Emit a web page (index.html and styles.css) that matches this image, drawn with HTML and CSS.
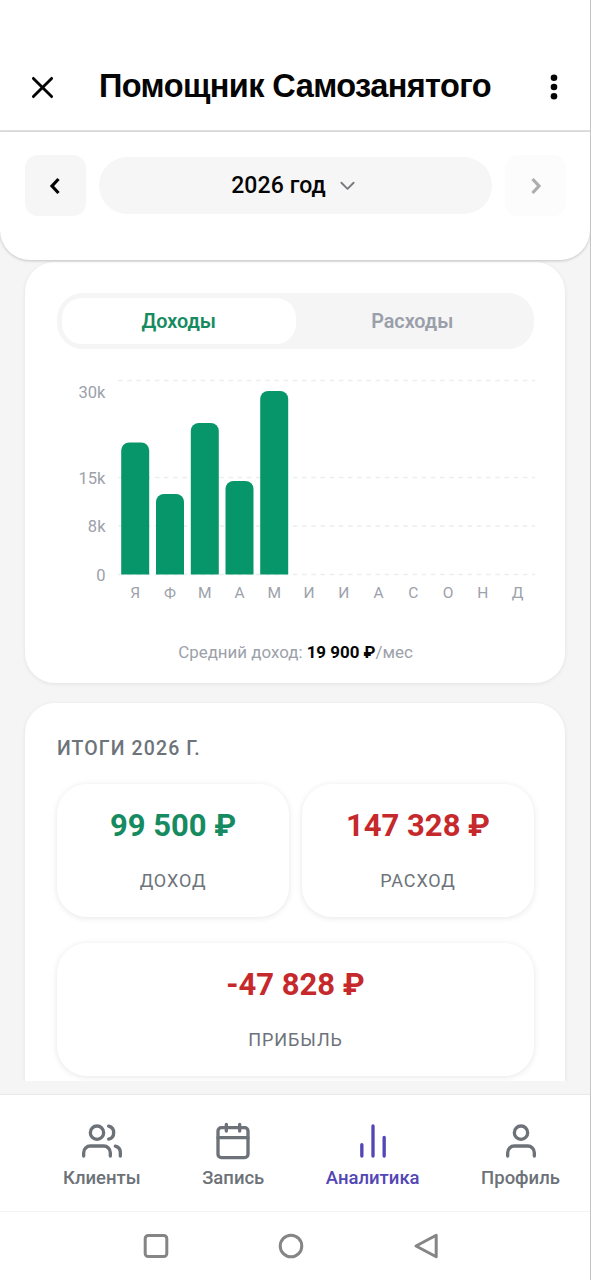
FILE: index.html
```html
<!DOCTYPE html>
<html lang="ru">
<head>
<meta charset="utf-8">
<title>Помощник Самозанятого</title>
<link rel="stylesheet" href="styles.css">
</head>
<body>
<div class="app">
  <header class="titlebar">
    <svg class="close" viewBox="0 0 24 24"><path d="M2.500 2.500l19 19M21.500 2.500l-19 19"/></svg>
    <h1 class="title">Помощник Самозанятого</h1>
    <svg class="more" viewBox="0 0 8 28"><circle cx="4" cy="4.700" r="3.300"/><circle cx="4" cy="14" r="3.300"/><circle cx="4" cy="23.300" r="3.300"/></svg>
  </header>

  <section class="period">
    <button class="step"><svg viewBox="0 0 12 18"><path d="M9.500 2L3 9l6.500 7"/></svg></button>
    <button class="year"><span class="year-label">2026 год</span><svg viewBox="0 0 16 10"><path d="M1.500 1.500L8 8l6.500-6.500"/></svg></button>
    <button class="step step-off"><svg viewBox="0 0 12 18"><path d="M2.500 2L9 9l-6.500 7"/></svg></button>
  </section>

  <main class="content">
    <section class="card chart-card">
      <div class="tabs"><div class="tab tab-active">Доходы</div><div class="tab">Расходы</div></div>
      <svg class="chart" viewBox="0 0 478 240">
        <g class="grid">
          <path d="M61 11.500H479"/><path d="M61 108.500H479"/><path d="M61 157H479"/><path d="M61 205.500H479"/>
        </g>
        <g class="bars">
          <path d="M64.200 205.500v-124a8 8 0 0 1 8-8h12a8 8 0 0 1 8 8v124z"/>
          <path d="M99 205.500v-72.500a8 8 0 0 1 8-8h12a8 8 0 0 1 8 8v72.500z"/>
          <path d="M133.800 205.500v-143.500a8 8 0 0 1 8-8h12a8 8 0 0 1 8 8v143.500z"/>
          <path d="M168.500 205.500v-85.500a8 8 0 0 1 8-8h12a8 8 0 0 1 8 8v85.500z"/>
          <path d="M203.200 205.500v-175.500a8 8 0 0 1 8-8h12a8 8 0 0 1 8 8v175.500z"/>
        </g>
        <g class="ylabels">
          <text x="48.500" y="29">30k</text><text x="48.500" y="114.500">15k</text><text x="48.500" y="163">8k</text><text x="48.500" y="211.500">0</text>
        </g>
        <g class="months">
          <text x="78.200" y="229">Я</text><text x="113" y="229">Ф</text><text x="147.700" y="229">М</text><text x="182.500" y="229">А</text><text x="217.200" y="229">М</text><text x="252" y="229">И</text><text x="286.700" y="229">И</text><text x="321.500" y="229">А</text><text x="356.200" y="229">С</text><text x="391" y="229">О</text><text x="425.700" y="229">Н</text><text x="460.500" y="229">Д</text>
        </g>
      </svg>
      <p class="average">Средний доход: <b>19 900 ₽</b>/мес</p>
    </section>

    <section class="card totals">
      <h2 class="totals-title">ИТОГИ 2026 Г.</h2>
      <div class="tiles">
        <div class="tile"><div class="sum sum-plus">99 500 ₽</div><div class="caption">ДОХОД</div></div>
        <div class="tile"><div class="sum">147 328 ₽</div><div class="caption">РАСХОД</div></div>
        <div class="tile tile-wide"><div class="sum">-47 828 ₽</div><div class="caption">ПРИБЫЛЬ</div></div>
      </div>
    </section>
  </main>

  <nav class="tabbar">
    <a class="nav-item"><svg viewBox="0 0 24 24"><path d="M17 21v-2a4 4 0 0 0-4-4H5a4 4 0 0 0-4 4v2"/><circle cx="9" cy="7" r="4"/><path d="M23 21v-2a4 4 0 0 0-3-3.870M16 3.130a4 4 0 0 1 0 7.750"/></svg><span>Клиенты</span></a>
    <a class="nav-item"><svg viewBox="0 0 24 24"><rect x="3" y="4" width="18" height="18" rx="2"/><path d="M16 2v4M8 2v4M3 10h18"/></svg><span>Запись</span></a>
    <a class="nav-item nav-active"><svg viewBox="0 0 24 24"><path d="M18.700 21V9.800M12 21V3M5.300 21v-6.800"/></svg><span>Аналитика</span></a>
    <a class="nav-item"><svg viewBox="0 0 24 24"><path d="M20 21v-2a4 4 0 0 0-4-4H8a4 4 0 0 0-4 4v2"/><circle cx="12" cy="7" r="4"/></svg><span>Профиль</span></a>
  </nav>

  <footer class="system">
    <svg viewBox="0 0 28 28"><rect x="3.200" y="3.400" width="21.600" height="21.200" rx="3"/></svg>
    <svg viewBox="0 0 28 28"><circle cx="14" cy="14" r="10.800"/></svg>
    <svg viewBox="0 0 28 28"><path d="M24.200 3.200v21.600L4 14z"/></svg>
  </footer>
</div>
</body>
</html>
```
FILE: styles.css
```css
* { box-sizing: border-box; margin: 0; padding: 0; }
body { background: #fff; font-family: Roboto, "Noto Sans", sans-serif; color: #050505; }
button { border: 0; font: inherit; color: inherit; }
svg { display: block; fill: none; stroke: currentColor; stroke-linecap: round; stroke-linejoin: round; }

.app { width: 591px; height: 1280px; display: flex; flex-direction: column; overflow: hidden; background: #f5f5f5; border-right: 1px solid #c4c4c4; }

.titlebar { height: 132px; flex: none; display: flex; align-items: center; padding: 44px 32px 0 31px; background: #fff; border-bottom: 2px solid #e0e0e0; }
.close { width: 23px; height: 23px; stroke-width: 3; }
.title { flex: 1; margin-left: 45px; padding-bottom: 2px; font: bold 32.500px/40px "Liberation Sans", Arial, sans-serif; letter-spacing: -.58px; white-space: nowrap; }
.more { width: 8px; height: 28px; fill: currentColor; stroke: none; }

.period { height: 128px; flex: none; display: flex; align-items: flex-start; justify-content: space-between; padding: 23px 24px 0 25px; background: #fff; border-radius: 0 0 30px 30px; box-shadow: 0 1px 3px rgba(0,0,0,.2); z-index: 1; }
.step { width: 61px; height: 61px; display: flex; align-items: center; justify-content: center; padding-right: 2px; border-radius: 13px; background: #f6f6f6; }
.step svg { width: 12px; height: 18px; stroke-width: 3.2; stroke-linecap: butt; stroke-linejoin: miter; }
.step-off { opacity: .32; padding-right: 0; }
.year { width: 393px; height: 57px; margin-top: 2px; padding-right: 5px; display: flex; align-items: center; justify-content: center; gap: 14px; border-radius: 29px; background: #f6f6f6; }
.year-label { font-size: 23px; font-weight: 500; letter-spacing: .1px; }
.year svg { width: 15px; height: 10px; stroke-width: 2; color: #77797c; }

.content { height: 821px; flex: none; padding: 2px 25px 0; overflow: hidden; display: flex; flex-direction: column; gap: 20px; }
.card { flex: none; border-radius: 30px; background: #fff; box-shadow: 0 1px 4px rgba(0,0,0,.08); padding: 31px 31px 0 32px; }
.chart-card { height: 421px; }
.tabs { height: 56px; display: flex; padding: 5px; border-radius: 26px; background: #f5f5f6; }
.tab { flex: 1; display: flex; align-items: center; justify-content: center; border-radius: 20px; font-size: 19.800px; font-weight: 600; color: #9a9fa9; }
.tab-active { background: #fff; color: #168b61; }
.chart { width: 478px; height: 240px; margin-top: 20px; }
.grid { stroke: #ebedef; stroke-width: 1.5; stroke-dasharray: 4.600 4.600; stroke-linecap: butt; }
.bars { fill: #079669; stroke: none; }
.ylabels { fill: #9ca1aa; stroke: none; font-size: 16.500px; text-anchor: end; }
.months { fill: #9ca1aa; stroke: none; font-size: 15.500px; text-anchor: middle; }
.average { margin-top: 31px; font-size: 16.900px; line-height: 24px; text-align: center; color: #9ca1aa; }
.average b { font-weight: 700; color: #050505; }

.totals { height: 460px; }
.totals-title { font-size: 19.500px; line-height: 30px; font-weight: 500; letter-spacing: 1.1px; color: #6d737a; }
.tiles { margin-top: 20px; display: grid; grid-template-columns: 1fr 1fr; gap: 26px 13px; }
.tile { height: 133px; padding-top: 21px; border-radius: 30px; background: #fff; box-shadow: 0 1px 6px rgba(0,0,0,.1); text-align: center; }
.tile-wide { grid-column: 1 / 3; }
.sum { font-size: 31px; line-height: 42px; font-weight: 700; color: #c5292c; }
.sum-plus { color: #168b61; }
.caption { margin-top: 21px; font-size: 18px; line-height: 26px; letter-spacing: .9px; color: #6d737a; }

.tabbar { height: 118px; flex: none; margin-top: 13px; display: flex; justify-content: space-between; padding: 26px 30px 0 63px; background: #fff; border-top: 1px solid #e9e9e9; border-bottom: 1px solid #f4f4f4; }
.nav-item { display: flex; flex-direction: column; align-items: center; color: #6d7278; font-size: 18.500px; line-height: 26px; font-weight: 500; }
.nav-item svg { width: 40px; height: 40px; margin-bottom: 4px; stroke-width: 2; }
.nav-active { color: #5346b5; }

.system { flex: 1; display: flex; justify-content: center; gap: 107px; padding: 20px 8px 0 0; background: #fff; color: #858585; }
.system svg { width: 28px; height: 28px; stroke-width: 3; }
```
